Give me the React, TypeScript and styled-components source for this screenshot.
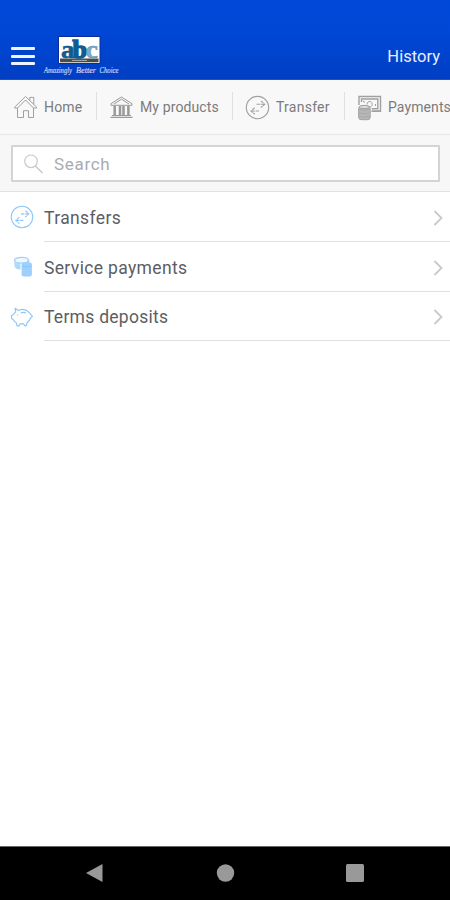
import React from "react";
import styled, { createGlobalStyle } from "styled-components";

const GlobalStyle = createGlobalStyle`
  *, *::before, *::after { box-sizing: border-box; }
  html, body { margin: 0; padding: 0; background: #fff; overflow: hidden; }
  body { font-family: Roboto, "Liberation Sans", sans-serif; }
  svg { display: block; flex: none; overflow: visible; }
`;

const Screen = styled.div`
  width: 450px;
  height: 900px;
  display: flex;
  flex-direction: column;
  overflow: hidden;
  background: #fff;
`;

const Header = styled.header`
  height: 80px;
  flex: none;
  display: flex;
  align-items: flex-start;
  padding: 35px 10px 0 11px;
  background: linear-gradient(#0048d8 0, #0047d6 30px, #003fc4 78px);
  border-bottom: 1px solid #2050b8;
`;

const MenuButton = styled.button`
  width: 25px;
  height: 18px;
  margin: 12px 7px 0 0;
  padding: 0;
  border: 0;
  background: none;
  display: flex;
  flex-direction: column;
  justify-content: space-between;
`;

const MenuBar = styled.span`
  width: 24px;
  height: 3px;
  border-radius: 1px;
  background: #eef3ff;
`;

const HeaderTitle = styled.h1`
  margin: 11px 0 0 auto;
  font-size: 16.5px;
  line-height: 22px;
  font-weight: 400;
  letter-spacing: 0.02px;
  color: #e9efff;
`;

const Tabs = styled.nav`
  height: 55px;
  flex: none;
  display: flex;
  align-items: center;
  background: #f8f8f8;
  border-bottom: 1px solid #e6e6e6;
`;

const Tab = styled.a<{ $width: number }>`
  width: ${(p) => p.$width}px;
  height: 28px;
  margin-top: -2px;
  flex: none;
  display: flex;
  align-items: center;
  gap: 6px;
  padding-left: 13px;
  border-right: 1px solid #e0e0e0;
  white-space: nowrap;

  & + & {
    padding-left: 12px;
  }
  & > svg {
    margin-top: 2px;
  }
`;

const TabLabel = styled.span<{ $spacing: number }>`
  font-size: 14px;
  line-height: 20px;
  letter-spacing: ${(p) => p.$spacing}px;
  color: #7b7b7b;
  margin-top: 2px;
`;

const SearchArea = styled.div`
  height: 57px;
  flex: none;
  padding: 10px 10px 9px 11px;
  background: #f7f7f7;
  border-bottom: 1px solid #e2e2e2;
`;

const SearchBox = styled.div`
  height: 37px;
  display: flex;
  align-items: center;
  gap: 11px;
  padding-left: 11px;
  background: #fff;
  border: 2px solid #d4d4d4;
  border-radius: 1px;
`;

const Placeholder = styled.span`
  font-size: 17px;
  line-height: 24px;
  letter-spacing: 0.7px;
  color: #a9acaf;
`;

const List = styled.ul`
  flex: 1;
  margin: 0;
  padding: 0;
  list-style: none;
`;

const Row = styled.li`
  height: 49.4px;
  display: flex;
  padding-left: 10px;
  gap: 10px;

  &:first-child {
    height: 50.4px;
  }
`;

const RowIcon = styled.div`
  width: 24px;
  height: 50px;
  display: flex;
  align-items: center;
`;

const RowBody = styled.div`
  flex: 1;
  display: flex;
  align-items: center;
  justify-content: space-between;
  padding: 3px 7px 0 0;
  border-bottom: 1px solid #e0e0e0;
`;

const RowLabel = styled.span<{ $spacing: number }>`
  font-size: 17.5px;
  line-height: 24px;
  letter-spacing: ${(p) => p.$spacing}px;
  color: #5b5e62;
`;

const SystemBar = styled.footer`
  height: 54px;
  flex: none;
  display: flex;
  align-items: center;
  justify-content: space-between;
  padding: 0 85px 2px;
  background: #000;
  border-top: 1px solid #666;
`;

const Logo = () => (
  <svg width="78" height="42" viewBox="0 0 78 42">
    <rect x="15.5" y="1.5" width="41.5" height="27" fill="#fff" stroke="#092e9b" />
    <rect x="17" y="23.5" width="38.5" height="3.8" fill="#4c4b48" />
    <path d="M29 25.4h15" stroke="#aaa" strokeWidth="1" />
    <g fontFamily="Liberation Serif, serif" fontWeight="700" fontSize="25" fill="#125b91" stroke="#125b91">
      <text x="18" y="22.6" fontSize="25" strokeWidth=".6" textLength="13.5" lengthAdjust="spacingAndGlyphs">a</text>
      <text x="29.5" y="22.6" fontSize="26" strokeWidth="1.6" textLength="14.5" lengthAdjust="spacingAndGlyphs">b</text>
      <text x="42.5" y="22.6" fontSize="25" fill="#7fabc9" stroke="#5d93b8" strokeWidth=".5" textLength="12.5" lengthAdjust="spacingAndGlyphs">c</text>
    </g>
    <g fontFamily="Liberation Serif, serif" fontStyle="italic" fontSize="8.5" fill="#c3d2fb" stroke="#c3d2fb" strokeWidth=".2">
      <text x="1" y="37.6" textLength="28" lengthAdjust="spacingAndGlyphs">Amazingly</text>
      <text x="33" y="37.6" textLength="20" lengthAdjust="spacingAndGlyphs">Better</text>
      <text x="56.5" y="37.6" textLength="19" lengthAdjust="spacingAndGlyphs">Choice</text>
    </g>
  </svg>
);

const HomeIcon = () => (
  <svg width="25" height="24" viewBox="0 0 25 24" fill="none" stroke="#a0a0a0" strokeWidth="1">
    <path d="M2 11.8 12.5 1.5 23.5 12v1h-3v9.5h-5v-6.8h-5v6.8h-6V13H1.5z" strokeLinejoin="round" />
    <path d="M4.5 13 12.5 5l8 8M16.8 5.5V2.4h4v6.8" />
  </svg>
);

const BankIcon = () => (
  <svg width="25" height="24" viewBox="0 0 25 24" fill="none" stroke="#999">
    <path d="M2 8.7 12.5 2 23 8.7v1.6H2zM5 9l7.5-4.8L20 9" strokeWidth="1" />
    <path d="M5.7 11v9M11 11v9M14.5 11v9M19.4 11v9" strokeWidth="2.5" />
    <path d="M3 20.5h19M1.5 22.3h22" strokeWidth="1.2" />
  </svg>
);

const TransferIcon = ({ color, size }: { color: string; size: number }) => (
  <svg width={size} height={size} viewBox="0 0 25 25" fill="none" stroke={color} strokeWidth="1.15">
    <circle cx="12.5" cy="12.5" r="11.2" />
    <path d="M11.5 9.2h8M16 5.9l3.7 3.3-3.7 3.3M14 16H6.2M9.7 12.7 6 16l3.7 3.3" strokeDasharray="3.3 .7" />
  </svg>
);

const PaymentsIcon = () => (
  <svg width="25" height="25" viewBox="0 0 25 25" fill="none" stroke="#a0a0a0">
    <path d="M2 10V1.5h21.5v14.7h-9M4.5 7V4h16.3v9.7h-6" strokeWidth="1.4" />
    <path d="M10 9.5c0-4 5.2-4 5.2-.2 0 2-1.3 2.6-2.7 2.6M6 6l2 1.5M18.5 11v-2M15 16h8" />
    <rect x="1.7" y="11" width="11.5" height="13.7" rx="2.5" fill="#b8b8b8" />
    <path d="M2 14.5q5.3 2 10.5 0M2 18q5.3 2 10.5 0M2 21.3q5.3 2 10.5 0" strokeWidth=".7" />
    <ellipse cx="7.4" cy="12" rx="5" ry="1.6" fill="#ddd" />
  </svg>
);

const SearchIcon = () => (
  <svg width="19" height="20" viewBox="0 0 19 20" fill="none" stroke="#c9c9c9" strokeWidth="1.2">
    <circle cx="7" cy="7.3" r="6.3" />
    <path d="m11.5 12 7 7" strokeWidth="1.5" />
  </svg>
);

const CoinsIcon = () => (
  <svg width="24" height="24" viewBox="0 0 24 24" fill="none" stroke="#9fd0fb">
    <path d="M4.5 5v6c0 2 2.5 3.5 6 3.5V6" fill="#b9ddfd" stroke="none" />
    <path d="M4.3 8.5q2 2.5 6 2.5M5.5 11.7q2 1.5 5 1.5" strokeWidth=".8" />
    <ellipse cx="11.5" cy="5.2" rx="7" ry="2.9" fill="#eef8ff" strokeWidth="1.3" />
    <path d="M18.5 5v4" strokeWidth="1.6" />
    <rect x="11.6" y="7.5" width="10.3" height="14" rx="2.2" fill="#9dd0fc" stroke="none" />
    <path d="M12 11q5 2 9.5 0" stroke="#80bff7" strokeWidth=".7" />
  </svg>
);

const PiggyIcon = () => (
  <svg width="24" height="24" viewBox="0 0 24 24" fill="none" stroke="#8dc7fa" strokeWidth="1.15" strokeLinejoin="round">
    <path d="m5 3.2 3.3 2.2c2.5-1.2 6.5-1.4 9.2.6 2.2 1.7 3.5 4 5 5.4l-1.7 1.4c-.8 2.2-2.3 4-3.8 5l-.6 2.8h-2l-.7-1.7H9.9l-.8 1.9h-2l-.7-2.9c-1.2-.8-2.2-1.9-2.8-2.9L1.5 13.5v-2.7l2-1.4c.5-1 1.3-1.9 2.2-2.5z" />
    <path d="M10.7 8q2.7-1.2 5.2 0M7.5 9.5v1" />
  </svg>
);

const Chevron = () => (
  <svg width="10" height="16" viewBox="0 0 10 16" fill="none" stroke="#c9c9c9" strokeWidth="1.8">
    <path d="m1.5 1 7 7-7 7" />
  </svg>
);

const tabs = [
  { label: "Home", width: 97, spacing: 0.15, icon: <HomeIcon /> },
  { label: "My products", width: 136, spacing: 0.12, icon: <BankIcon /> },
  { label: "Transfer", width: 112, spacing: 0.25, icon: <TransferIcon color="#a0a0a0" size={25} /> },
  { label: "Payments", width: 120, spacing: 0.1, icon: <PaymentsIcon /> },
];

const rows = [
  { label: "Transfers", spacing: 0.38, icon: <TransferIcon color="#8dc7fa" size={24} /> },
  { label: "Service payments", spacing: 0.35, icon: <CoinsIcon /> },
  { label: "Terms deposits", spacing: 0.27, icon: <PiggyIcon /> },
];

export default function App() {
  return (
    <>
      <GlobalStyle />
      <Screen>
        <Header>
          <MenuButton aria-label="Menu">
            <MenuBar />
            <MenuBar />
            <MenuBar />
          </MenuButton>
          <Logo />
          <HeaderTitle>History</HeaderTitle>
        </Header>
        <Tabs>
          {tabs.map((t) => (
            <Tab key={t.label} $width={t.width}>
              {t.icon}
              <TabLabel $spacing={t.spacing}>{t.label}</TabLabel>
            </Tab>
          ))}
        </Tabs>
        <SearchArea>
          <SearchBox>
            <SearchIcon />
            <Placeholder>Search</Placeholder>
          </SearchBox>
        </SearchArea>
        <List>
          {rows.map((r) => (
            <Row key={r.label}>
              <RowIcon>{r.icon}</RowIcon>
              <RowBody>
                <RowLabel $spacing={r.spacing}>{r.label}</RowLabel>
                <Chevron />
              </RowBody>
            </Row>
          ))}
        </List>
        <SystemBar>
          <svg width="19" height="20" viewBox="0 0 19 20">
            <path d="M1 10 17.5 1v18z" fill="#999" />
          </svg>
          <svg width="18" height="18" viewBox="0 0 18 18">
            <circle cx="9.5" cy="9" r="8.7" fill="#999" />
          </svg>
          <svg width="20" height="20" viewBox="0 0 20 20">
            <rect x="1" y="1" width="18" height="18" rx="1.5" fill="#999" />
          </svg>
        </SystemBar>
      </Screen>
    </>
  );
}
